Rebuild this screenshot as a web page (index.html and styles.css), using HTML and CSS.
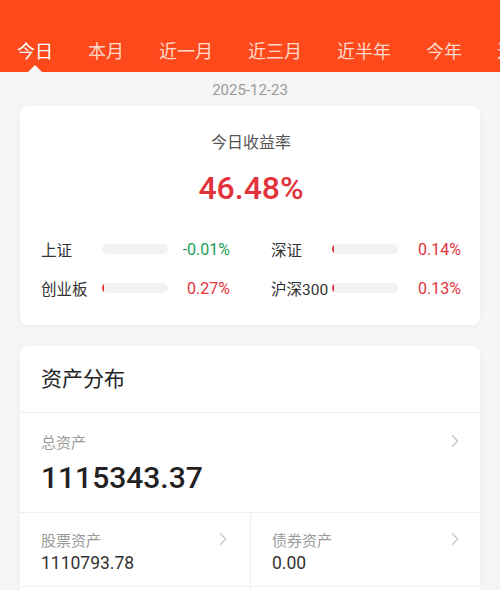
FILE: index.html
```
<!DOCTYPE html>
<html lang="zh-CN">
<head>
<meta charset="utf-8">
<title>收益</title>
<link rel="stylesheet" href="styles.css">
</head>
<body>
<header class="header">
  <nav class="tabs">
    <span class="tab active">今日</span>
    <span class="tab">本月</span>
    <span class="tab">近一月</span>
    <span class="tab">近三月</span>
    <span class="tab">近半年</span>
    <span class="tab">今年</span>
    <span class="tab">近一年</span>
  </nav>
</header>
<div class="date">2025-12-23</div>
<section class="card rate-card">
  <div class="rate-title">今日收益率</div>
  <div class="rate-value">46.48%</div>
  <div class="index-grid">
    <div class="index-item">
      <span class="index-name">上证</span>
      <span class="bar"><span class="fill down" style="width:0%"></span></span>
      <span class="index-val down-text">-0.01%</span>
    </div>
    <div class="index-item">
      <span class="index-name">深证</span>
      <span class="bar"><span class="fill up" style="width:2px"></span></span>
      <span class="index-val up-text">0.14%</span>
    </div>
    <div class="index-item">
      <span class="index-name">创业板</span>
      <span class="bar"><span class="fill up" style="width:2px"></span></span>
      <span class="index-val up-text">0.27%</span>
    </div>
    <div class="index-item">
      <span class="index-name">沪深300</span>
      <span class="bar"><span class="fill up" style="width:2px"></span></span>
      <span class="index-val up-text">0.13%</span>
    </div>
  </div>
</section>
<section class="card asset-card">
  <div class="asset-head">资产分布</div>
  <div class="total">
    <div class="label-row">
      <span class="label">总资产</span>
      <svg class="chev" width="8" height="14" viewBox="0 0 8 14"><polyline points="1.5,1.5 6.5,7 1.5,12.5" fill="none" stroke="#c9c9c9" stroke-width="1.5" stroke-linecap="round" stroke-linejoin="round"/></svg>
    </div>
    <div class="total-value">1115343.37</div>
  </div>
  <div class="sub-row">
    <div class="sub">
      <div class="label-row">
        <span class="label">股票资产</span>
        <svg class="chev" width="8" height="14" viewBox="0 0 8 14"><polyline points="1.5,1.5 6.5,7 1.5,12.5" fill="none" stroke="#c9c9c9" stroke-width="1.5" stroke-linecap="round" stroke-linejoin="round"/></svg>
      </div>
      <div class="sub-value">1110793.78</div>
    </div>
    <div class="sub">
      <div class="label-row">
        <span class="label">债券资产</span>
        <svg class="chev" width="8" height="14" viewBox="0 0 8 14"><polyline points="1.5,1.5 6.5,7 1.5,12.5" fill="none" stroke="#c9c9c9" stroke-width="1.5" stroke-linecap="round" stroke-linejoin="round"/></svg>
      </div>
      <div class="sub-value">0.00</div>
    </div>
  </div>
  <div class="sub-row">
    <div class="sub sub-empty"></div>
    <div class="sub sub-empty"></div>
  </div>
</section>
</body>
</html>
```
FILE: styles.css
```
* { box-sizing: border-box; }
html, body { margin: 0; padding: 0; }
body {
  background: #f5f5f5;
  font-family: Roboto, "Noto Sans CJK SC", sans-serif;
  color: #333;
  width: 500px;
  overflow: hidden;
}
.header {
  background: #fe4a1b;
  height: 72px;
  overflow: hidden;
}
.tabs {
  display: flex;
  white-space: nowrap;
}
.tab {
  position: relative;
  flex: none;
  padding: 36px 17.5px 4px;
  line-height: 32px;
  font-size: 18px;
  color: #ffd9cc;
}
.tab:first-child { padding-left: 17px; }
.tab.active { color: #fff; }
.tab.active::after {
  content: "";
  position: absolute;
  left: 50%;
  bottom: 0;
  margin-left: -7px;
  border-left: 7px solid transparent;
  border-right: 7px solid transparent;
  border-bottom: 7px solid #f5f5f5;
}
.date {
  height: 34px;
  line-height: 36px;
  text-align: center;
  font-size: 15px;
  color: #9a9a9a;
}
.card {
  margin: 0 20px;
  background: #fff;
  border-radius: 8px;
  box-shadow: 0 1px 4px rgba(0,0,0,0.04);
}
.rate-card {
  padding: 26px 19px 25px 21px;
}
.rate-title {
  text-align: center;
  font-size: 16px;
  line-height: 22px;
  color: #555;
}
.rate-value {
  margin-top: 14px;
  text-align: center;
  font-size: 32px;
  line-height: 40px;
  font-weight: 500;
  color: #e2333c;
}
.index-grid {
  margin-top: 29px;
  display: grid;
  grid-template-columns: 189px 190px;
  column-gap: 41px;
  row-gap: 15px;
}
.index-item {
  display: flex;
  align-items: center;
  height: 24px;
}
.index-name {
  width: 61px;
  flex: none;
  font-size: 15.5px;
  color: #333;
  white-space: nowrap;
}
.bar {
  width: 66px;
  height: 10px;
  flex: none;
  border-radius: 5px;
  background: #f2f2f2;
  overflow: hidden;
  display: flex;
}
.fill { height: 100%; }
.fill.up { background: #e2333c; }
.fill.down { background: #1aa05a; }
.index-val {
  flex: 1;
  text-align: right;
  font-size: 16px;
}
.up-text { color: #e2333c; }
.down-text { color: #1aa05a; }
.asset-card {
  margin-top: 21px;
  overflow: hidden;
}
.asset-head {
  height: 67px;
  line-height: 67px;
  padding-left: 21px;
  font-size: 21px;
  color: #222;
  border-bottom: 1px solid #efefef;
}
.total {
  padding: 18px 21px 14px 21px;
  border-bottom: 1px solid #efefef;
}
.label-row {
  display: flex;
  justify-content: space-between;
  align-items: center;
  height: 20px;
}
.label {
  font-size: 15px;
  color: #9a9a9a;
}
.total-value {
  margin-top: 7px;
  font-size: 30px;
  line-height: 40px;
  font-weight: 500;
  color: #222;
}
.sub-row {
  display: grid;
  grid-template-columns: 1fr 1fr;
  border-bottom: 1px solid #efefef;
}
.sub {
  padding: 16px 23px 11px 21px;
}
.sub + .sub {
  border-left: 1px solid #efefef;
  padding-right: 21px;
}
.sub-empty {
  height: 73px;
}
.sub-value {
  margin-top: 2px;
  font-size: 17.5px;
  line-height: 24px;
  color: #333;
}
```
